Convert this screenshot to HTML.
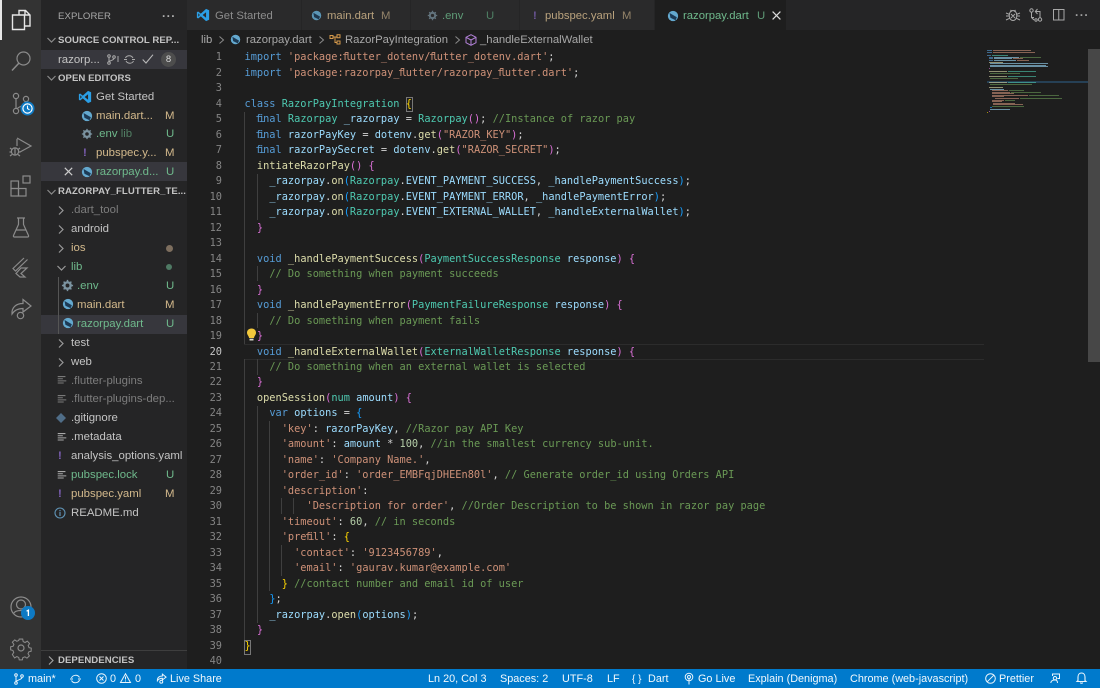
<!DOCTYPE html>
<html><head><meta charset="utf-8"><style>
html,body{margin:0;padding:0;width:1100px;height:688px;overflow:hidden;background:#1e1e1e}
body{position:relative;font-family:"Liberation Sans",sans-serif;font-size:11.3px;color:#ccc}
.a{position:absolute;white-space:pre}
svg{position:absolute;overflow:visible}
.ic{fill:none;stroke:#8b8b8b;stroke-width:1.2}
.row{position:absolute;white-space:pre;line-height:19px;height:19px;color:#c4c4c4;margin-top:1px;font-size:11.4px}
.h{position:absolute;white-space:pre;font-weight:bold;font-size:9.6px;letter-spacing:.05px;color:#c4c4c4;line-height:19px;margin-top:1px}
.mod{color:#d3b98c}.unt{color:#6fb98c}.ign{color:#7d7d7d}
#code,#nums{position:absolute;top:50.3px;font-family:"DejaVu Sans Mono","Liberation Mono",monospace;font-size:10.3px;line-height:15.49px}
#code{left:244.5px;color:#d4d4d4}
#code div,#nums div{height:15.49px;white-space:pre}
#nums{left:190px;width:32px;text-align:right;color:#858585}
.k{color:#569cd6}.t{color:#4ec9b0}.v{color:#9cdcfe}.f{color:#dcdcaa}.s{color:#ce9178}.c{color:#6a9955}.n{color:#b5cea8}
.g{color:#ffd700}.p{color:#da70d6}.b{color:#179fff}
.li{letter-spacing:-3.1px;margin-left:-1.55px;margin-right:1.55px}
.gd{position:absolute;width:1px;background:#3f3f3f}
.st{position:absolute;top:670px;height:19px;line-height:19px;color:#f2f8fc;white-space:pre;font-size:10.85px}
.tab{position:absolute;top:1px;height:30px;line-height:30px;white-space:pre;font-size:11.3px}
.tb{position:absolute;top:0;height:30px;width:1px;background:#252526}
.bc{position:absolute;top:33px;line-height:15px;color:#a8a8a8;font-size:11.3px;white-space:pre}
</style></head><body>
<svg width="0" height="0" style="position:absolute"><defs>
<symbol id="dart" viewBox="0 0 14 14"><circle cx="7" cy="7" r="6" fill="#64a9cf"/><path d="M3 3.5 L11.5 8.5 L10 12 L4 9z" fill="#1c3a55"/></symbol>
<symbol id="gear" viewBox="0 0 14 14"><circle cx="7" cy="7" r="3.4" fill="none" stroke="#7b93a0" stroke-width="2.6"/><path d="M7 1v2M7 11v2M1 7h2M11 7h2M2.8 2.8l1.4 1.4M9.8 9.8l1.4 1.4M2.8 11.2l1.4-1.4M9.8 4.2l1.4-1.4" stroke="#7b93a0" stroke-width="1.6"/></symbol>
<symbol id="vsc" viewBox="0 0 16 16"><path d="M11.5 1 15 2.6v10.8L11.5 15 5.5 9.6 2.4 12 1 11.2V4.8L2.4 4l3.1 2.4zM11.5 4.8 7.6 8l3.9 3.2zM2.6 6v4L4.4 8z" fill="#2b9fe6"/></symbol>
<symbol id="lines" viewBox="0 0 14 14"><path d="M2 3h9M2 5.5h6M2 8h10M2 10.5h7" stroke="#a8a8a8" stroke-width="1.2" fill="none"/></symbol>
</defs></svg>

<!-- Activity bar -->
<div class="a" style="left:0;top:0;width:41px;height:669px;background:#333"></div>
<div class="a" style="left:0;top:0;width:2px;height:40px;background:#e8e8e8"></div>
<svg style="left:10px;top:9px" width="22" height="22" viewBox="0 0 22 22" fill="none" stroke="#e6e6e6" stroke-width="1.4"><path d="M9 6V1.5h6.5L20 6v11h-5.5M15 1.5V6h5M2.5 6H14.500v14.500h-12z"/></svg>
<svg class="ic" style="left:10px;top:50px" width="22" height="22" viewBox="0 0 22 22"><circle cx="13.5" cy="8.5" r="6.5"/><path d="M8.8 13.2 2 20.5" stroke-width="1.5"/></svg>
<svg class="ic" style="left:11px;top:92px" width="24" height="24" viewBox="0 0 24 24"><circle cx="5" cy="4" r="2.6"/><circle cx="5" cy="19" r="2.6"/><circle cx="15" cy="7" r="2.6"/><path d="M5 6.6V16.4M15 9.6c0 4-6 4-9 7.2"/></svg>
<svg style="left:20px;top:101px" width="15" height="15" viewBox="0 0 15 15"><circle cx="7.5" cy="7.5" r="7" fill="#0e7ac4"/><circle cx="7.5" cy="7.5" r="4.6" fill="none" stroke="#fff" stroke-width="1.2"/><path d="M7.5 4.6v3l2 1.2" fill="none" stroke="#fff" stroke-width="1.1"/></svg>
<svg class="ic" style="left:9px;top:134px" width="24" height="24" viewBox="0 0 24 24"><path d="M8 5v7M8 4l14 8-11 6"/><circle cx="6" cy="17.5" r="3.6"/><path d="M1 14l2 1.5M11 14l-2 1.5M0.5 18h2M9.5 18h2M1 22l2-1.5M11 22l-2-1.5M6 14v7"/></svg>
<svg class="ic" style="left:10px;top:175px" width="22" height="22" viewBox="0 0 22 22"><rect x="1" y="6" width="7.5" height="7.5"/><rect x="1" y="13.5" width="7.5" height="7.5"/><rect x="8.5" y="13.5" width="7.5" height="7.5"/><rect x="13" y="1" width="7" height="7"/></svg>
<svg class="ic" style="left:12px;top:217px" width="18" height="21" viewBox="0 0 18 21"><path d="M5 1h8M6.5 1v6.5L1.5 18.5c-.4 1 .2 1.5 1 1.5h13c.8 0 1.4-.6 1-1.5L11.5 7.5V1M4.5 13h9"/></svg>
<svg class="ic" style="left:11px;top:256px" width="20" height="22" viewBox="0 0 20 22"><path d="M13 2 2 12.5l2.5 2.5L16.5 3.5 M10 12h6l-6 5.5 4 3.5h-5l-4-3.5z"/></svg>
<svg class="ic" style="left:9px;top:297px" width="24" height="24" viewBox="0 0 24 24" stroke-width="1.4"><path d="M14 2.5 22 9l-8 6V11.5C9 11.5 5.5 13 3 17 2.5 10.5 7 6.5 14 6.5z"/><circle cx="11.5" cy="18.5" r="3.2"/></svg>
<svg class="ic" style="left:10px;top:596px" width="22" height="22" viewBox="0 0 22 22"><circle cx="11" cy="11" r="10"/><circle cx="11" cy="8.5" r="4.5"/><path d="M3.5 17.5c2-4 13-4 15 0"/></svg>
<svg style="left:21px;top:606px" width="14" height="14" viewBox="0 0 14 14"><circle cx="7" cy="7" r="7" fill="#0e7ac4"/><path d="M5.6 5.2 7.4 4.2V10" fill="none" stroke="#fff" stroke-width="1.3"/></svg>
<svg class="ic" style="left:10px;top:637px" width="22" height="22" viewBox="0 0 22 22"><path d="M9 1h4l.6 3 2.2 1 2.6-1.6 2.6 2.8-1.6 2.4 1 2.4 2.6.6v0l-.2 3.6-2.6.6-1 2.2 1.6 2.6-2.8 2.6-2.4-1.6-2.4 1-.6 2.6H9l-.6-2.8-2.2-1-2.6 1.6L1 19l1.6-2.4-1-2.4L-1 13.6V10l2.8-.6 1-2.2L1 4.6l2.8-2.6 2.4 1.6 2.2-1z" transform="translate(1.5 1.2) scale(.86)"/><circle cx="11" cy="11" r="3"/></svg>

<!-- Sidebar -->
<div class="a" style="left:41px;top:0;width:146px;height:669px;background:#252526"></div>
<div class="a" style="left:58px;top:9px;font-size:9.6px;line-height:15px;color:#a8a8a8;letter-spacing:.1px">EXPLORER</div>
<div class="a" style="left:162px;top:9px;font-size:12px;line-height:15px;color:#b0b0b0;letter-spacing:.6px;font-weight:bold">···</div>
<div class="a" style="left:41px;top:50px;width:146px;height:19px;background:#37373d"></div>
<div class="a" style="left:41px;top:162px;width:146px;height:19px;background:#37373d"></div>
<div class="a" style="left:41px;top:315px;width:146px;height:19px;background:#37373d"></div>

<svg class="ic" style="left:47px;top:37px" width="9" height="6" viewBox="0 0 9 6"><path d="M.5 1 4.5 5 8.5 1"/></svg>
<div class="h" style="left:58px;top:30px">SOURCE CONTROL REP...</div>
<div class="row" style="left:58px;top:50px">razorp...</div>
<svg class="ic" style="left:107px;top:54px;stroke:#aaa;stroke-width:1" width="13" height="11" viewBox="0 0 13 11"><circle cx="2" cy="2" r="1.3"/><circle cx="2" cy="9" r="1.3"/><circle cx="7" cy="3" r="1.3"/><path d="M2 3.3v4.400M7 4.300c0 2-3 2-5 3.200M11 2v6"/></svg>
<svg class="ic" style="left:124px;top:54px;stroke:#aaa;stroke-width:1" width="11" height="11" viewBox="0 0 11 11"><path d="M1.500 4C2.500 1.500 7 .5 9 4M9.500 7C8.500 9.500 4 10.500 2 7M0 5.500h3M8 5.500h3"/></svg>
<svg class="ic" style="left:142px;top:54px;stroke:#b8b8b8;stroke-width:1.1" width="12" height="10" viewBox="0 0 12 10"><path d="M.7 5.500 4 9 11 .7"/></svg>
<div class="a" style="left:161px;top:52px;width:15px;height:15px;border-radius:8px;background:#4d4d4d;color:#ddd;font-size:9.500px;line-height:15px;text-align:center">8</div>

<svg class="ic" style="left:47px;top:75px" width="9" height="6" viewBox="0 0 9 6"><path d="M.5 1 4.500 5 8.500 1"/></svg>
<div class="h" style="left:58px;top:68px">OPEN EDITORS</div>
<svg style="left:78px;top:90px" width="14" height="14"><use href="#vsc" width="14" height="14"/></svg>
<div class="row" style="left:96px;top:87px">Get Started</div>
<svg style="left:81px;top:110px" width="12" height="12"><use href="#dart" width="12" height="12"/></svg>
<div class="row mod" style="left:96px;top:106px">main.dart...</div>
<div class="row mod" style="left:165px;top:106px">M</div>
<svg style="left:81px;top:128px" width="12" height="12"><use href="#gear" width="12" height="12"/></svg>
<div class="row unt" style="left:96px;top:124px">.env <span style="opacity:.6">lib</span></div>
<div class="row unt" style="left:166px;top:124px">U</div>
<div class="row" style="left:83px;top:143px;color:#7d5fb5;font-weight:bold">!</div>
<div class="row mod" style="left:96px;top:143px">pubspec.y...</div>
<div class="row mod" style="left:165px;top:143px">M</div>
<svg class="ic" style="left:64px;top:167px;stroke:#ccc" width="9" height="9" viewBox="0 0 9 9"><path d="M.8.800 8.200 8.200M8.200.800 .8 8.200"/></svg>
<svg style="left:81px;top:166px" width="12" height="12"><use href="#dart" width="12" height="12"/></svg>
<div class="row unt" style="left:96px;top:162px">razorpay.d...</div>
<div class="row unt" style="left:166px;top:162px">U</div>

<svg class="ic" style="left:47px;top:189px" width="9" height="6" viewBox="0 0 9 6"><path d="M.5 1 4.500 5 8.500 1"/></svg>
<div class="h" style="left:58px;top:181px">RAZORPAY_FLUTTER_TE...</div>

<svg class="ic" style="left:58px;top:206px;stroke:#9a9a9a" width="6" height="9" viewBox="0 0 6 9"><path d="M1 .5 5 4.500 1 8.500"/></svg>
<div class="row ign" style="left:71px;top:200px">.dart_tool</div>
<svg class="ic" style="left:58px;top:225px;stroke:#9a9a9a" width="6" height="9" viewBox="0 0 6 9"><path d="M1 .5 5 4.500 1 8.500"/></svg>
<div class="row" style="left:71px;top:219px">android</div>
<svg class="ic" style="left:58px;top:244px;stroke:#9a9a9a" width="6" height="9" viewBox="0 0 6 9"><path d="M1 .5 5 4.500 1 8.500"/></svg>
<div class="row mod" style="left:71px;top:238px">ios</div>
<div class="a" style="left:166px;top:245px;width:7px;height:7px;border-radius:4px;background:#7d6e5e"></div>
<svg class="ic" style="left:57px;top:265px;stroke:#9a9a9a" width="9" height="6" viewBox="0 0 9 6"><path d="M.5 1 4.500 5 8.500 1"/></svg>
<div class="row unt" style="left:71px;top:257px">lib</div>
<div class="a" style="left:166px;top:264px;width:6px;height:6px;border-radius:4px;background:#4f7a64"></div>
<div class="a" style="left:58px;top:277px;width:1px;height:57px;background:#555"></div>
<svg style="left:61px;top:279px" width="13" height="13"><use href="#gear" width="13" height="13"/></svg>
<div class="row unt" style="left:77px;top:276px">.env</div>
<div class="row unt" style="left:166px;top:276px">U</div>
<svg style="left:62px;top:298px" width="12" height="12"><use href="#dart" width="12" height="12"/></svg>
<div class="row mod" style="left:77px;top:295px">main.dart</div>
<div class="row mod" style="left:165px;top:295px">M</div>
<svg style="left:62px;top:317px" width="12" height="12"><use href="#dart" width="12" height="12"/></svg>
<div class="row unt" style="left:77px;top:314px">razorpay.dart</div>
<div class="row unt" style="left:166px;top:314px">U</div>
<svg class="ic" style="left:58px;top:339px;stroke:#9a9a9a" width="6" height="9" viewBox="0 0 6 9"><path d="M1 .5 5 4.500 1 8.500"/></svg>
<div class="row" style="left:71px;top:333px">test</div>
<svg class="ic" style="left:58px;top:358px;stroke:#9a9a9a" width="6" height="9" viewBox="0 0 6 9"><path d="M1 .5 5 4.500 1 8.500"/></svg>
<div class="row" style="left:71px;top:352px">web</div>
<svg style="left:56px;top:374px;opacity:.65" width="12" height="12"><use href="#lines" width="12" height="12"/></svg>
<div class="row ign" style="left:71px;top:371px">.flutter-plugins</div>
<svg style="left:56px;top:393px;opacity:.65" width="12" height="12"><use href="#lines" width="12" height="12"/></svg>
<div class="row ign" style="left:71px;top:389px">.flutter-plugins-dep...</div>
<svg style="left:55px;top:412px" width="12" height="12" viewBox="0 0 12 12"><path d="M6 1 11 6 6 11 1 6z" fill="#4f6d87"/></svg>
<div class="row" style="left:71px;top:408px">.gitignore</div>
<svg style="left:56px;top:431px" width="12" height="12"><use href="#lines" width="12" height="12"/></svg>
<div class="row" style="left:71px;top:427px">.metadata</div>
<div class="row" style="left:58px;top:446px;color:#7d5fb5;font-weight:bold">!</div>
<div class="row" style="left:71px;top:446px">analysis_options.yaml</div>
<svg style="left:56px;top:469px" width="12" height="12"><use href="#lines" width="12" height="12"/></svg>
<div class="row unt" style="left:71px;top:465px">pubspec.lock</div>
<div class="row unt" style="left:166px;top:465px">U</div>
<div class="row" style="left:58px;top:484px;color:#7d5fb5;font-weight:bold">!</div>
<div class="row mod" style="left:71px;top:484px">pubspec.yaml</div>
<div class="row mod" style="left:165px;top:484px">M</div>
<svg style="left:54px;top:507px" width="12" height="12" viewBox="0 0 12 12"><circle cx="6" cy="6" r="5" fill="none" stroke="#5f93b5" stroke-width="1.1"/><path d="M6 5v4M6 3v1.200" stroke="#5f93b5" stroke-width="1.200"/></svg>
<div class="row" style="left:71px;top:503px">README.md</div>

<div class="a" style="left:41px;top:650px;width:146px;height:1px;background:#3e3e3e"></div>
<svg class="ic" style="left:48px;top:656px;stroke:#a0a0a0" width="6" height="9" viewBox="0 0 6 9"><path d="M1 .5 5 4.500 1 8.500"/></svg>
<div class="h" style="left:58px;top:650px">DEPENDENCIES</div>

<!-- Tabs -->
<div class="a" style="left:187px;top:0;width:913px;height:30px;background:#252526"></div>
<div class="a" style="left:187px;top:0;width:468px;height:30px;background:#2a2a2b"></div>
<div class="a" style="left:655px;top:0;width:131px;height:30px;background:#1e1e1e"></div>
<div class="tb" style="left:301px"></div><div class="tb" style="left:410px"></div><div class="tb" style="left:519px"></div><div class="tb" style="left:654px"></div><div class="tb" style="left:786px"></div>
<svg style="left:196px;top:8px" width="14" height="14"><use href="#vsc" width="14" height="14"/></svg>
<div class="tab" style="left:215px;color:#8c8c8c">Get Started</div>
<svg style="left:311px;top:10px;opacity:.85" width="11" height="11"><use href="#dart" width="11" height="11"/></svg>
<div class="tab" style="left:327px;color:#b9a27d">main.dart</div>
<div class="tab" style="left:381px;color:#94846a">M</div>
<svg style="left:427px;top:10px;opacity:.7" width="11" height="11"><use href="#gear" width="11" height="11"/></svg>
<div class="tab" style="left:442px;color:#5f9c78">.env</div>
<div class="tab" style="left:486px;color:#4f8065">U</div>
<div class="tab" style="left:533px;color:#6c5699;font-weight:bold">!</div>
<div class="tab" style="left:545px;color:#b9a27d">pubspec.yaml</div>
<div class="tab" style="left:622px;color:#94846a">M</div>
<svg style="left:667px;top:10px" width="12" height="12"><use href="#dart" width="12" height="12"/></svg>
<div class="tab" style="left:683px;color:#6fb98c">razorpay.dart</div>
<div class="tab" style="left:757px;color:#5f9c78">U</div>
<svg class="ic" style="left:772px;top:11px;stroke:#ddd;stroke-width:1.200" width="9" height="9" viewBox="0 0 9 9"><path d="M.6.600 8.400 8.400M8.400.600 .6 8.400"/></svg>

<svg class="ic" style="left:1006px;top:8px;stroke:#a8a8a8;stroke-width:1" width="14" height="14" viewBox="0 0 14 14"><ellipse cx="7" cy="7.500" rx="3.800" ry="5"/><path d="M4.500 2 6 3.500M9.500 2 8 3.500M0 5l3.300 1.300M14 5l-3.300 1.300M0 8h3M14 8h-3M0 12l3.600-1.700M14 12l-3.600-1.700M5 6l4 4M9 6l-4 4"/></svg>
<svg class="ic" style="left:1029px;top:8px;stroke:#a8a8a8;stroke-width:1" width="14" height="14" viewBox="0 0 14 14"><circle cx="2.500" cy="2.500" r="1.700"/><circle cx="11" cy="11.500" r="1.700"/><circle cx="7" cy="12" r="1.200"/><path d="M2.500 4.200V9.500L5 12M2.500 9.500l2.500 0M11 9.800V3.500H6.500M8.500 1 6.300 3.500 8.500 6"/></svg>
<svg class="ic" style="left:1053px;top:9px;stroke:#a8a8a8;stroke-width:1" width="12" height="12" viewBox="0 0 12 12"><rect x=".5" y=".5" width="10.500" height="10.500"/><path d="M5.750.5v10.500"/></svg>
<div class="a" style="left:1075px;top:8px;font-size:12px;line-height:15px;color:#a0a0a0;letter-spacing:.7px;font-weight:bold">···</div>

<!-- Breadcrumb -->
<div class="bc" style="left:201px">lib</div>
<svg class="ic" style="left:219px;top:36px;stroke:#8a8a8a;stroke-width:1" width="5" height="8" viewBox="0 0 5 8"><path d="M.5.500 4.500 4 .5 7.500"/></svg>
<svg style="left:230px;top:34px" width="11" height="11"><use href="#dart" width="11" height="11"/></svg>
<div class="bc" style="left:246px">razorpay.dart</div>
<svg class="ic" style="left:319px;top:36px;stroke:#8a8a8a;stroke-width:1" width="5" height="8" viewBox="0 0 5 8"><path d="M.5.500 4.500 4 .5 7.500"/></svg>
<svg style="left:329px;top:34px" width="12" height="11" viewBox="0 0 12 11" fill="none" stroke="#d79a4b" stroke-width="1"><path d="M1 1.500h3v3H1zM8 .8h3v3H8zM8 7h3v3H8zM4 3h4M6 3v5.500h2"/></svg>
<div class="bc" style="left:345px">RazorPayIntegration</div>
<svg class="ic" style="left:455px;top:36px;stroke:#8a8a8a;stroke-width:1" width="5" height="8" viewBox="0 0 5 8"><path d="M.5.500 4.500 4 .5 7.500"/></svg>
<svg style="left:465px;top:34px" width="12" height="12" viewBox="0 0 12 12" fill="none" stroke="#b180d7" stroke-width="1"><path d="M6 .7 11 3.300v5.400L6 11.300 1 8.700V3.300zM1 3.300 6 6l5-2.700M6 6v5.300"/></svg>
<div class="bc" style="left:480px">_handleExternalWallet</div>

<!-- Line 20 highlight -->
<div class="a" style="left:244px;top:344px;width:740px;height:14px;border-top:1px solid #2c2c2c;border-bottom:1px solid #2c2c2c"></div>

<!-- Indent guides -->
<div class="gd" style="left:244px;top:112px;height:232px"></div>
<div class="gd" style="left:244px;top:359px;height:282px"></div>
<div class="gd" style="left:257px;top:174px;height:46px"></div>
<div class="gd" style="left:257px;top:266px;height:15px"></div>
<div class="gd" style="left:257px;top:313px;height:15px"></div>
<div class="gd" style="left:257px;top:359px;height:16px"></div>
<div class="gd" style="left:257px;top:406px;height:217px"></div>
<div class="gd" style="left:269px;top:421px;height:170px"></div>
<div class="gd" style="left:281px;top:498px;height:16px"></div>
<div class="gd" style="left:293px;top:498px;height:16px"></div>
<div class="gd" style="left:281px;top:545px;height:31px"></div>

<!-- Bracket match boxes -->
<div class="a" style="left:405.500px;top:97px;width:5px;height:13px;border:1px solid #777"></div>
<div class="a" style="left:244px;top:640px;width:5px;height:13px;border:1px solid #777"></div>

<div id="nums"><div>1</div><div>2</div><div>3</div><div>4</div><div>5</div><div>6</div><div>7</div><div>8</div><div>9</div><div>10</div><div>11</div><div>12</div><div>13</div><div>14</div><div>15</div><div>16</div><div>17</div><div>18</div><div>19</div><div style="color:#c6c6c6">20</div><div>21</div><div>22</div><div>23</div><div>24</div><div>25</div><div>26</div><div>27</div><div>28</div><div>29</div><div>30</div><div>31</div><div>32</div><div>33</div><div>34</div><div>35</div><div>36</div><div>37</div><div>38</div><div>39</div><div>40</div></div>

<div id="code"><div><span class="k">import</span> <span class="s">'package:<span class="li">fl</span>utter_dotenv/<span class="li">fl</span>utter_dotenv.dart'</span>;</div>
<div><span class="k">import</span> <span class="s">'package:razorpay_<span class="li">fl</span>utter/razorpay_<span class="li">fl</span>utter.dart'</span>;</div>
<div> </div>
<div><span class="k">class</span> <span class="t">RazorPayIntegration</span> <span class="g">{</span></div>
<div>  <span class="k"><span class="li">fi</span>nal</span> <span class="t">Razorpay</span> <span class="v">_razorpay</span> = <span class="t">Razorpay</span><span class="p">()</span>; <span class="c">//Instance of razor pay</span></div>
<div>  <span class="k"><span class="li">fi</span>nal</span> <span class="v">razorPayKey</span> = <span class="v">dotenv</span>.<span class="f">get</span><span class="p">(</span><span class="s">"RAZOR_KEY"</span><span class="p">)</span>;</div>
<div>  <span class="k"><span class="li">fi</span>nal</span> <span class="v">razorPaySecret</span> = <span class="v">dotenv</span>.<span class="f">get</span><span class="p">(</span><span class="s">"RAZOR_SECRET"</span><span class="p">)</span>;</div>
<div>  <span class="f">intiateRazorPay</span><span class="p">()</span> <span class="p">{</span></div>
<div>    <span class="v">_razorpay</span>.<span class="f">on</span><span class="b">(</span><span class="t">Razorpay</span>.<span class="v">EVENT_PAYMENT_SUCCESS</span>, <span class="v">_handlePaymentSuccess</span><span class="b">)</span>;</div>
<div>    <span class="v">_razorpay</span>.<span class="f">on</span><span class="b">(</span><span class="t">Razorpay</span>.<span class="v">EVENT_PAYMENT_ERROR</span>, <span class="v">_handlePaymentError</span><span class="b">)</span>;</div>
<div>    <span class="v">_razorpay</span>.<span class="f">on</span><span class="b">(</span><span class="t">Razorpay</span>.<span class="v">EVENT_EXTERNAL_WALLET</span>, <span class="v">_handleExternalWallet</span><span class="b">)</span>;</div>
<div>  <span class="p">}</span></div>
<div> </div>
<div>  <span class="k">void</span> <span class="f">_handlePaymentSuccess</span><span class="p">(</span><span class="t">PaymentSuccessResponse</span> <span class="v">response</span><span class="p">)</span> <span class="p">{</span></div>
<div>    <span class="c">// Do something when payment succeeds</span></div>
<div>  <span class="p">}</span></div>
<div>  <span class="k">void</span> <span class="f">_handlePaymentError</span><span class="p">(</span><span class="t">PaymentFailureResponse</span> <span class="v">response</span><span class="p">)</span> <span class="p">{</span></div>
<div>    <span class="c">// Do something when payment fails</span></div>
<div>  <span class="p">}</span></div>
<div>  <span class="k">void</span> <span class="f">_handleExternalWallet</span><span class="p">(</span><span class="t">ExternalWalletResponse</span> <span class="v">response</span><span class="p">)</span> <span class="p">{</span></div>
<div>    <span class="c">// Do something when an external wallet is selected</span></div>
<div>  <span class="p">}</span></div>
<div>  <span class="f">openSession</span><span class="p">(</span><span class="t">num</span> <span class="v">amount</span><span class="p">)</span> <span class="p">{</span></div>
<div>    <span class="k">var</span> <span class="v">options</span> = <span class="b">{</span></div>
<div>      <span class="s">'key'</span>: <span class="v">razorPayKey</span>, <span class="c">//Razor pay API Key</span></div>
<div>      <span class="s">'amount'</span>: <span class="v">amount</span> * <span class="n">100</span>, <span class="c">//in the smallest currency sub-unit.</span></div>
<div>      <span class="s">'name'</span>: <span class="s">'Company Name.'</span>,</div>
<div>      <span class="s">'order_id'</span>: <span class="s">'order_EMBFqjDHEEn80l'</span>, <span class="c">// Generate order_id using Orders API</span></div>
<div>      <span class="s">'description'</span>:</div>
<div>          <span class="s">'Description for order'</span>, <span class="c">//Order Description to be shown in razor pay page</span></div>
<div>      <span class="s">'timeout'</span>: <span class="n">60</span>, <span class="c">// in seconds</span></div>
<div>      <span class="s">'pre<span class="li">fi</span>ll'</span>: <span class="g">{</span></div>
<div>        <span class="s">'contact'</span>: <span class="s">'9123456789'</span>,</div>
<div>        <span class="s">'email'</span>: <span class="s">'gaurav.kumar@example.com'</span></div>
<div>      <span class="g">}</span> <span class="c">//contact number and email id of user</span></div>
<div>    <span class="b">}</span>;</div>
<div>    <span class="v">_razorpay</span>.<span class="f">open</span><span class="b">(</span><span class="v">options</span><span class="b">)</span>;</div>
<div>  <span class="p">}</span></div>
<div><span class="g">}</span></div>
<div> </div></div>

<!-- Lightbulb -->
<svg style="left:246px;top:328px" width="11" height="13" viewBox="0 0 11 13"><path d="M5.500 .5C2.700 .5 1 2.500 1 4.700c0 2.300 2 3.300 2 5.300h5c0-2 2-3 2-5.300C10 2.500 8.300 .5 5.500 .5z" fill="#f2c83c"/><rect x="3.500" y="10.700" width="4" height="1.800" fill="#d8d8c8"/></svg>

<!-- Minimap -->
<svg style="left:987px;top:49px" width="113" height="320" viewBox="0 0 113 320">
<rect x="0" y="32" width="101" height="2" fill="#264055"/>
<rect x="101" y="0" width="12" height="313" fill="#474747"/>
<g opacity=".6">
<rect x="0" y="1" width="5" height="1" fill="#569cd6"/><rect x="6" y="1" width="38" height="1" fill="#ce9178"/>
<rect x="0" y="3" width="5" height="1" fill="#569cd6"/><rect x="6" y="3" width="42" height="1" fill="#ce9178"/>
<rect x="0" y="6" width="4" height="1" fill="#569cd6"/><rect x="5" y="6" width="16" height="1" fill="#4ec9b0"/>
<rect x="2" y="8" width="4" height="1" fill="#569cd6"/><rect x="7" y="8" width="25" height="1" fill="#9cdcfe"/><rect x="33" y="8" width="21" height="1" fill="#6a9955"/>
<rect x="2" y="9" width="4" height="1" fill="#569cd6"/><rect x="7" y="9" width="18" height="1" fill="#9cdcfe"/><rect x="26" y="9" width="10" height="1" fill="#ce9178"/>
<rect x="2" y="11" width="4" height="1" fill="#569cd6"/><rect x="7" y="11" width="22" height="1" fill="#9cdcfe"/><rect x="30" y="11" width="12" height="1" fill="#ce9178"/>
<rect x="2" y="13" width="14" height="1" fill="#dcdcaa"/>
<rect x="3" y="14" width="58" height="1" fill="#9cdcfe"/>
<rect x="3" y="16" width="56" height="1" fill="#9cdcfe"/>
<rect x="3" y="17" width="58" height="1" fill="#9cdcfe"/>
<rect x="2" y="19" width="1" height="1" fill="#da70d6"/>
<rect x="2" y="22" width="18" height="1" fill="#dcdcaa"/><rect x="21" y="22" width="28" height="1" fill="#4ec9b0"/>
<rect x="3" y="24" width="30" height="1" fill="#6a9955"/>
<rect x="2" y="27" width="18" height="1" fill="#dcdcaa"/><rect x="21" y="27" width="28" height="1" fill="#4ec9b0"/>
<rect x="3" y="29" width="28" height="1" fill="#6a9955"/>
<rect x="2" y="33" width="18" height="1" fill="#dcdcaa"/><rect x="21" y="33" width="28" height="1" fill="#4ec9b0"/>
<rect x="3" y="35" width="42" height="1" fill="#6a9955"/>
<rect x="2" y="38" width="14" height="1" fill="#dcdcaa"/>
<rect x="3" y="40" width="14" height="1" fill="#9cdcfe"/>
<rect x="5" y="41" width="16" height="1" fill="#ce9178"/><rect x="22" y="41" width="15" height="1" fill="#6a9955"/>
<rect x="5" y="43" width="18" height="1" fill="#ce9178"/><rect x="24" y="43" width="30" height="1" fill="#6a9955"/>
<rect x="5" y="44" width="22" height="1" fill="#ce9178"/>
<rect x="5" y="46" width="36" height="1" fill="#ce9178"/><rect x="42" y="46" width="30" height="1" fill="#6a9955"/>
<rect x="5" y="47" width="12" height="1" fill="#ce9178"/>
<rect x="8" y="49" width="24" height="1" fill="#ce9178"/><rect x="33" y="49" width="42" height="1" fill="#6a9955"/>
<rect x="5" y="51" width="12" height="1" fill="#ce9178"/><rect x="18" y="51" width="10" height="1" fill="#6a9955"/>
<rect x="5" y="52" width="10" height="1" fill="#ce9178"/>
<rect x="6" y="54" width="22" height="1" fill="#ce9178"/>
<rect x="6" y="55" width="30" height="1" fill="#ce9178"/>
<rect x="5" y="57" width="32" height="1" fill="#6a9955"/>
<rect x="3" y="58" width="2" height="1" fill="#179fff"/>
<rect x="3" y="60" width="20" height="1" fill="#9cdcfe"/>
<rect x="2" y="62" width="1" height="1" fill="#da70d6"/>
<rect x="0" y="63" width="1" height="1" fill="#ffd700"/>
</g>
</svg>

<!-- Status bar -->
<div class="a" style="left:0;top:669px;width:1100px;height:19px;background:#007acc"></div>
<svg class="ic" style="left:14px;top:673px;stroke:#eaf4fb;stroke-width:1" width="10" height="12" viewBox="0 0 10 12"><circle cx="2" cy="2" r="1.300"/><circle cx="2" cy="10" r="1.300"/><circle cx="8" cy="3" r="1.300"/><path d="M2 3.300v5.400M8 4.300c0 2.500-4 2-6 4.400"/></svg>
<div class="st" style="left:28px">main*</div>
<svg class="ic" style="left:70px;top:674px;stroke:#eaf4fb;stroke-width:1" width="11" height="10" viewBox="0 0 11 10"><path d="M1.500 4C2.500 1 7.500 0 9.500 3.500M9.500 6C8.500 9 3.500 10 1.500 6.500M0 5h3M8 5h3"/></svg>
<svg class="ic" style="left:96px;top:673px;stroke:#eaf4fb;stroke-width:1" width="11" height="11" viewBox="0 0 11 11"><circle cx="5.500" cy="5.500" r="4.800"/><path d="M3.500 3.500l4 4M7.500 3.500l-4 4"/></svg>
<div class="st" style="left:110px">0</div>
<svg class="ic" style="left:120px;top:673px;stroke:#eaf4fb;stroke-width:1" width="11" height="10" viewBox="0 0 11 10"><path d="M5.500.7 10.500 9.500H.5zM5.500 3.500v3M5.500 7.500v1"/></svg>
<div class="st" style="left:135px">0</div>
<svg class="ic" style="left:156px;top:673px;stroke:#eaf4fb;stroke-width:1" width="11" height="11" viewBox="0 0 24 24"><path d="M14 2.500 22 9l-8 6V11.500C9 11.500 5.500 13 3 17 2.500 10.500 7 6.500 14 6.500z" stroke-width="2.200"/><circle cx="11.500" cy="19" r="3.200" stroke-width="2.200"/></svg>
<div class="st" style="left:170px">Live Share</div>
<div class="st" style="left:428px">Ln 20, Col 3</div>
<div class="st" style="left:500px">Spaces: 2</div>
<div class="st" style="left:562px">UTF-8</div>
<div class="st" style="left:607px">LF</div>
<div class="st" style="left:632px;font-size:10px">{ }</div>
<div class="st" style="left:648px">Dart</div>
<svg class="ic" style="left:684px;top:673px;stroke:#eaf4fb;stroke-width:1" width="10" height="12" viewBox="0 0 10 12"><circle cx="5" cy="4" r="1.500"/><circle cx="5" cy="4" r="3.800"/><path d="M5 5.500v6"/></svg>
<div class="st" style="left:698px">Go Live</div>
<div class="st" style="left:748px">Explain (Denigma)</div>
<div class="st" style="left:850px">Chrome (web-javascript)</div>
<svg class="ic" style="left:985px;top:673px;stroke:#eaf4fb;stroke-width:1" width="11" height="11" viewBox="0 0 11 11"><circle cx="5.500" cy="5.500" r="4.800"/><path d="M2.200 8.800 8.800 2.200"/></svg>
<div class="st" style="left:999px">Prettier</div>
<svg class="ic" style="left:1050px;top:673px;stroke:#eaf4fb;stroke-width:1" width="11" height="11" viewBox="0 0 11 11"><path d="M.8 10C1 7.500 3 7 5 7c2 0 2.500 1 2.500 3M2.500 3V1h7v4.500H7.500M5 3.500a1.700 1.700 0 1 0 0 3.400 1.700 1.700 0 0 0 0-3.400z"/></svg>
<svg class="ic" style="left:1076px;top:672px;stroke:#eaf4fb;stroke-width:1.100" width="11" height="12" viewBox="0 0 11 12"><path d="M2 8.500V5c0-2.500 1.500-4 3.500-4S9 2.500 9 5v3.500l1 1H1zM4.500 10.500c0 1 2 1 2 0"/></svg>
</body></html>
